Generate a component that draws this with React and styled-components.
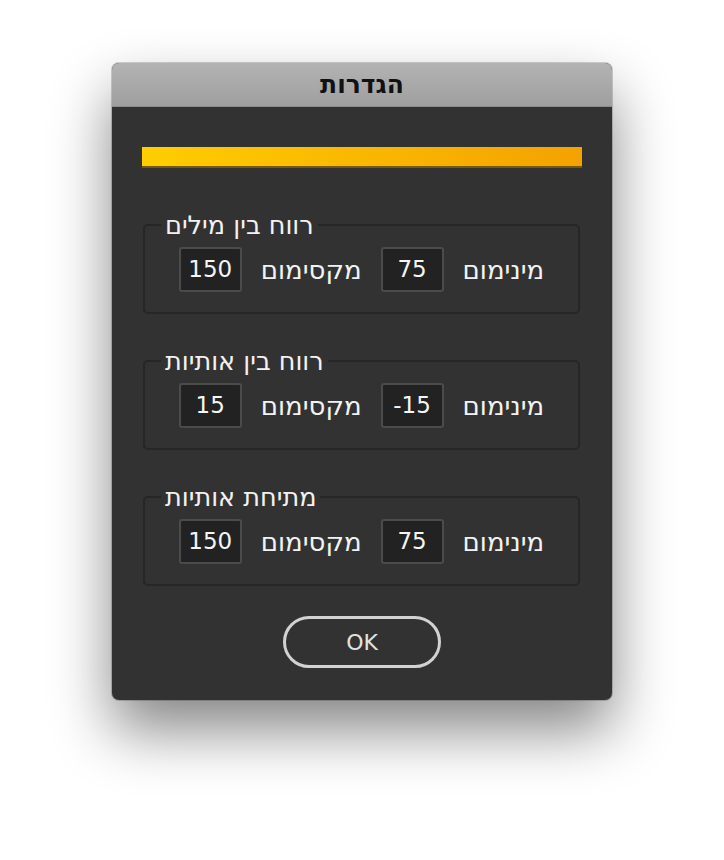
import React from 'react';
import styled, { createGlobalStyle } from 'styled-components';

const GlobalStyle = createGlobalStyle`
  html, body {
    margin: 0;
    padding: 0;
    background: #ffffff;
    font-family: "DejaVu Sans", "Liberation Sans", sans-serif;
  }
`;

const groups = [
  { title: 'רווח בין מילים', min: '75', max: '150' },
  { title: 'רווח בין אותיות', min: '-15', max: '15' },
  { title: 'מתיחת אותיות', min: '75', max: '150' },
];

export default function App() {
  return (
    <>
      <GlobalStyle />
      <Page>
        <Window>
          <TitleBar>הגדרות</TitleBar>
          <Body>
            <Progress />
            {groups.map((g) => (
              <Group key={g.title}>
                <Legend>{g.title}</Legend>
                <Row dir="rtl">
                  <Label>מינימום</Label>
                  <Field dir="ltr">{g.min}</Field>
                  <Label>מקסימום</Label>
                  <Field dir="ltr">{g.max}</Field>
                </Row>
              </Group>
            ))}
            <Footer>
              <OkButton>OK</OkButton>
            </Footer>
          </Body>
        </Window>
      </Page>
    </>
  );
}

const Page = styled.div`
  display: flex;
  justify-content: center;
  padding-top: 63px;
  height: 860px;
  box-sizing: border-box;
`;

const Window = styled.div`
  width: 500px;
  height: 637px;
  border-radius: 7px;
  overflow: hidden;
  background: #323232;
  box-shadow: 0 0 0 1px rgba(0, 0, 0, 0.18), 0 30px 60px rgba(0, 0, 0, 0.48);
  display: flex;
  flex-direction: column;
`;

const TitleBar = styled.div`
  height: 43px;
  line-height: 44px;
  text-align: center;
  font-size: 25px;
  font-weight: bold;
  color: #111;
  background: linear-gradient(#b3b3b3, #9f9f9f);
  border-bottom: 1px solid #8a8a8a;
`;

const Body = styled.div`
  padding: 40px 30px 0;
  display: flex;
  flex-direction: column;
`;

const Progress = styled.div`
  height: 19px;
  background: linear-gradient(to right, #ffcd00, #f4a200);
  border-bottom: 2px solid #7a5800;
  margin-bottom: 45px;
`;

const Group = styled.fieldset`
  margin: 0 2px 35px 1px;
  padding: 10px 0 20px;
  border: 2px solid #262626;
  border-radius: 5px;
  min-width: 0;
`;

const Legend = styled.legend`
  margin-left: 16px;
  padding: 0 4px;
  font-size: 25.5px;
  line-height: 24px;
  color: #f2f2f2;
`;

const Row = styled.div`
  display: flex;
  justify-content: center;
  align-items: center;
  gap: 19px;
`;

const Label = styled.span`
  font-size: 26px;
  color: #f2f2f2;
`;

const Field = styled.div`
  width: 59px;
  height: 41px;
  box-sizing: content-box;
  border: 2px solid #4b4b4b;
  border-radius: 3px;
  background: #222222;
  color: #f5f5f5;
  font-size: 23px;
  line-height: 41px;
  text-align: center;
`;

const Footer = styled.div`
  display: flex;
  justify-content: center;
  margin-top: -5px;
`;

const OkButton = styled.button`
  width: 158px;
  height: 52px;
  border: 3px solid #d2d2d2;
  border-radius: 26px;
  background: transparent;
  color: #e2e2e2;
  font-family: "DejaVu Sans", "Liberation Sans", sans-serif;
  font-size: 22px;
`;
